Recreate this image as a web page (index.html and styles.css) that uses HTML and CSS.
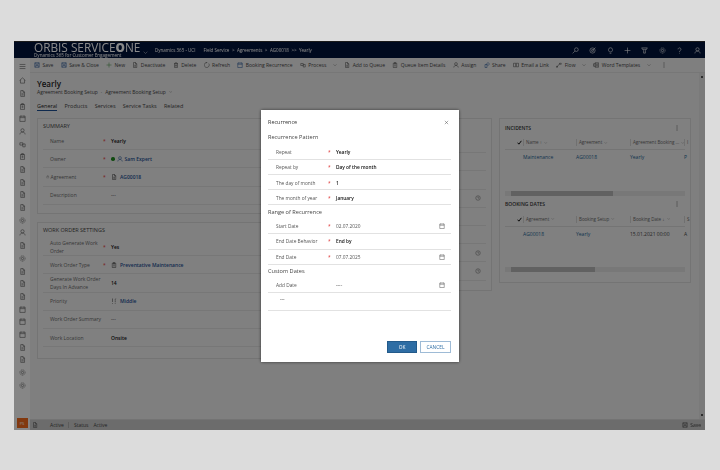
FILE: index.html
```html
<!DOCTYPE html>
<html lang="en">
  <head>
    <title>Recurrence</title>
    <meta charset="UTF-8">
    <link rel="stylesheet" href="styles.css">
  </head>
  <body>
    <svg class="sprite" xmlns="http://www.w3.org/2000/svg">
      <symbol id="doc" viewBox="0 0 12 12"><path d="M3 1h4l2.5 2.5V11H3zM7 1v3h2.5M4.5 6.5h3.500M4.500 8.500h3.500"/></symbol>
      <symbol id="clip" viewBox="0 0 12 12"><path d="M2.500 2.500h7V11h-7zM4.500 1h3v2.500h-3zM4.500 6h3M4.500 8h3"/></symbol>
      <symbol id="save" viewBox="0 0 12 12"><path d="M1.500 1.500h9v9h-9zM3.500 1.500v3h5v-3M3.500 10.500v-3.500h5v3.500"/></symbol>
      <symbol id="plus" viewBox="0 0 12 12"><path d="M6 1v10M1 6h10"/></symbol>
      <symbol id="trash" viewBox="0 0 12 12"><path d="M2 3h8M4.500 3V1.500h3V3M3 3v8h6V3M5 5v4M7 5v4"/></symbol>
      <symbol id="refresh" viewBox="0 0 12 12"><path d="M9.500 3A5 5 0 1 1 6 1M6 1l-1.500-1M6 1L4.500 2.500"/></symbol>
      <symbol id="cal" viewBox="0 0 12 12"><path d="M1.500 2h9v9h-9zM1.500 4.500h9M3.500 1v2M8.500 1v2"/></symbol>
      <symbol id="flow" viewBox="0 0 12 12"><path d="M1.500 3h5v4h-5zM6.500 5h4v5h-4z"/></symbol>
      <symbol id="person" viewBox="0 0 12 12"><circle cx="6" cy="4" r="2.800"/><path d="M1.500 11c.5-3 2-4 4.500-4s4 1 4.500 4"/></symbol>
      <symbol id="share" viewBox="0 0 12 12"><path d="M2 5h4v6H2zM5 4l3-3 3 3-3 3z"/></symbol>
      <symbol id="mail" viewBox="0 0 12 12"><path d="M1 2.500h4.500v7H1zM6.500 2.500H11v7H6.500z"/></symbol>
      <symbol id="spark" viewBox="0 0 12 12"><path d="M1.500 9.500c3 0 3-5 6-6M7 2.500h3.500v2H7zM1 8.500h2v2H1z"/></symbol>
      <symbol id="word" viewBox="0 0 12 12"><path d="M4 1.500h7v9H4zM1 3.500h5v5H1zM7 4h3M7 6h3M7 8h3"/></symbol>
      <symbol id="home" viewBox="0 0 12 12"><path d="M1 6l5-4.500L11 6M2.500 5v5.500h7V5"/></symbol>
      <symbol id="gear" viewBox="0 0 12 12"><circle cx="6" cy="6" r="2"/><circle cx="6" cy="6" r="4.500" stroke-dasharray="2 1"/></symbol>
      <symbol id="clock" viewBox="0 0 12 12"><circle cx="6" cy="6" r="4.500"/><path d="M6 3v3.200h2.200"/></symbol>
      <symbol id="search" viewBox="0 0 12 12"><circle cx="7.500" cy="4.500" r="3.200"/><path d="M5 7l-4 4"/></symbol>
      <symbol id="target" viewBox="0 0 12 12"><circle cx="6" cy="6" r="4.500"/><circle cx="6" cy="6" r="1.800"/><path d="M6 6l5-5"/></symbol>
      <symbol id="bulb" viewBox="0 0 12 12"><path d="M4.500 8.500C3 7.500 2.500 6 2.500 4.800a3.500 3.500 0 0 1 7 0c0 1.200-.5 2.700-2 3.700zM4.500 10.800h3"/></symbol>
      <symbol id="filter" viewBox="0 0 12 12"><path d="M1 1.500h10L7.500 6v4.500h-3V6zM2.800 4h6.400"/></symbol>
      <symbol id="help" viewBox="0 0 12 12"><path d="M3.500 4a2.500 2.500 0 1 1 4 2C6.500 6.800 6 7 6 8.500M6 10v1.200"/></symbol>
      <symbol id="chev" viewBox="0 0 12 12"><path d="M1.500 4L6 8.500 10.500 4"/></symbol>
      <symbol id="close" viewBox="0 0 12 12"><path d="M2 2l8 8M10 2l-8 8"/></symbol>
      <symbol id="check" viewBox="0 0 12 12"><path d="M1.500 6.500L4.500 10l6-8" stroke-width="2.400"/></symbol>
      <symbol id="lock" viewBox="0 0 12 12"><path d="M2.500 5.500h7V11h-7zM4 5.500V3.500a2 2 0 0 1 4 0v2"/></symbol>
      <symbol id="bars" viewBox="0 0 12 12"><path d="M1 2.500h10M1 6h10M1 9.500h10"/></symbol>
      <symbol id="more" viewBox="0 0 12 12"><path d="M6 1v2M6 5v2M6 9v2" stroke-width="1.600"/></symbol>
      <symbol id="prio" viewBox="0 0 12 12"><path d="M3 1v7M3 10v1.500M8 4l1.500-3M8.500 4.500v4M8.500 10v1.500"/></symbol>
    </svg>

    <div class="window">
      <header class="topbar">
        <div class="brand">
          <span class="logo">ORBIS SERVICE<b>O</b>NE</span>
          <span class="brand-sub">Dynamics 365 for Customer Engagement</span>
        </div>
        <svg class="ico top-chev"><use href="#chev"/></svg>
        <nav class="crumbs">
          <span class="app">Dynamics 365 - UCI</span>
          <span>Field Service</span><i>&gt;</i>
          <span>Agreements</span><i>&gt;</i>
          <span>AG00018</span><i>&gt;&gt;</i>
          <span>Yearly</span>
        </nav>
        <div class="top-icons">
          <svg class="ico"><use href="#search"/></svg>
          <svg class="ico"><use href="#target"/></svg>
          <svg class="ico"><use href="#bulb"/></svg>
          <svg class="ico"><use href="#plus"/></svg>
          <svg class="ico"><use href="#filter"/></svg>
          <svg class="ico"><use href="#gear"/></svg>
          <svg class="ico"><use href="#help"/></svg>
          <svg class="ico"><use href="#person"/></svg>
        </div>
      </header>

      <div class="below">
        <aside class="sidebar">
          <svg class="ico menu"><use href="#bars"/></svg>
          <svg class="ico"><use href="#home"/></svg>
          <svg class="ico"><use href="#doc"/></svg>
          <svg class="ico"><use href="#clip"/></svg>
          <svg class="ico"><use href="#cal"/></svg>
          <svg class="ico"><use href="#person"/></svg>
          <svg class="ico"><use href="#flow"/></svg>
          <svg class="ico"><use href="#clip"/></svg>
          <svg class="ico"><use href="#doc"/></svg>
          <svg class="ico"><use href="#doc"/></svg>
          <svg class="ico"><use href="#doc"/></svg>
          <svg class="ico"><use href="#doc"/></svg>
          <svg class="ico"><use href="#gear"/></svg>
          <svg class="ico"><use href="#person"/></svg>
          <svg class="ico"><use href="#doc"/></svg>
          <svg class="ico"><use href="#gear"/></svg>
          <svg class="ico"><use href="#doc"/></svg>
          <svg class="ico"><use href="#doc"/></svg>
          <svg class="ico"><use href="#doc"/></svg>
          <svg class="ico"><use href="#cal"/></svg>
          <svg class="ico"><use href="#cal"/></svg>
          <svg class="ico"><use href="#cal"/></svg>
          <svg class="ico"><use href="#doc"/></svg>
          <svg class="ico"><use href="#doc"/></svg>
          <svg class="ico"><use href="#gear"/></svg>
          <svg class="ico"><use href="#gear"/></svg>
          <span class="avatar">PS</span>
        </aside>

        <div class="main">
          <div class="commands">
            <span class="cmd"><svg class="ico blue"><use href="#save"/></svg>Save</span>
            <span class="cmd"><svg class="ico blue"><use href="#save"/></svg>Save &amp; Close</span>
            <span class="cmd"><svg class="ico green"><use href="#plus"/></svg>New</span>
            <span class="cmd"><svg class="ico"><use href="#doc"/></svg>Deactivate</span>
            <span class="cmd"><svg class="ico"><use href="#trash"/></svg>Delete</span>
            <span class="cmd"><svg class="ico"><use href="#refresh"/></svg>Refresh</span>
            <span class="cmd"><svg class="ico blue"><use href="#cal"/></svg>Booking Recurrence</span>
            <span class="cmd"><svg class="ico"><use href="#flow"/></svg>Process<svg class="ico small"><use href="#chev"/></svg></span>
            <span class="cmd"><svg class="ico"><use href="#doc"/></svg>Add to Queue</span>
            <span class="cmd"><svg class="ico"><use href="#clip"/></svg>Queue Item Details</span>
            <span class="cmd"><svg class="ico"><use href="#person"/></svg>Assign</span>
            <span class="cmd"><svg class="ico blue"><use href="#share"/></svg>Share</span>
            <span class="cmd"><svg class="ico"><use href="#mail"/></svg>Email a Link</span>
            <span class="cmd"><svg class="ico"><use href="#spark"/></svg>Flow<svg class="ico small"><use href="#chev"/></svg></span>
            <span class="cmd"><svg class="ico"><use href="#word"/></svg>Word Templates<svg class="ico small"><use href="#chev"/></svg></span>
            <svg class="ico kebab"><use href="#more"/></svg>
          </div>

          <div class="content">
            <div class="page">
              <h1 class="title">Yearly</h1>
              <div class="subtitle"><span>Agreement Booking Setup</span><span>·</span><span>Agreement Booking Setup</span><svg class="ico tiny"><use href="#chev"/></svg></div>
              <div class="tabs">
                <span class="tab on">General</span>
                <span class="tab">Products</span>
                <span class="tab">Services</span>
                <span class="tab">Service Tasks</span>
                <span class="tab">Related</span>
              </div>

              <div class="columns">
                <div class="col">
                  <section class="card summary">
                    <h2>SUMMARY</h2>
                    <div class="row"><label>Name</label><em>*</em><strong>Yearly</strong></div>
                    <div class="row"><label>Owner</label><em>*</em><a><span class="dot"></span><svg class="ico link"><use href="#person"/></svg>Sam Expert</a></div>
                    <div class="row"><label class="locked"><svg class="ico tiny"><use href="#lock"/></svg>Agreement</label><em>*</em><a><svg class="ico dark"><use href="#doc"/></svg>AG00018</a></div>
                    <div class="row"><label>Description</label><em></em><span>---</span></div>
                  </section>
                  <section class="card settings">
                    <h2>WORK ORDER SETTINGS</h2>
                    <div class="row"><label>Auto Generate Work Order</label><em>*</em><strong>Yes</strong></div>
                    <div class="row"><label>Work Order Type</label><em>*</em><a><svg class="ico dark"><use href="#clip"/></svg>Preventative Maintenance</a></div>
                    <div class="row"><label>Generate Work Order Days In Advance</label><em></em><strong>14</strong></div>
                    <div class="row"><label>Priority</label><em></em><a><svg class="ico dark"><use href="#prio"/></svg>Middle</a></div>
                    <div class="row"><label>Work Order Summary</label><em></em><span>---</span></div>
                    <div class="row"><label>Work Location</label><em></em><strong>Onsite</strong></div>
                  </section>
                </div>

                <section class="card middle">
                  <div class="slot"></div>
                  <div class="slot"></div>
                  <div class="slot"></div>
                  <div class="slot"><svg class="ico clock"><use href="#clock"/></svg></div>
                  <div class="slot"></div>
                  <div class="slot"></div>
                  <div class="slot"><svg class="ico clock"><use href="#clock"/></svg></div>
                  <div class="slot"><svg class="ico clock"><use href="#clock"/></svg></div>
                </section>

                <section class="card side">
                  <div class="panel">
                    <div class="panel-head"><h2>INCIDENTS</h2><svg class="ico"><use href="#more"/></svg></div>
                    <div class="grid-row grid-head">
                      <span class="tick"><svg class="ico"><use href="#check"/></svg></span>
                      <span>Name ↑ <svg class="ico tiny"><use href="#chev"/></svg></span>
                      <span>Agreement <svg class="ico tiny"><use href="#chev"/></svg></span>
                      <span>Agreement Booking ... <svg class="ico tiny"><use href="#chev"/></svg></span>
                      <span>I</span>
                    </div>
                    <div class="grid-row">
                      <span></span><a>Maintenance</a><a>AG00018</a><a>Yearly</a><a>P</a>
                    </div>
                    <div class="hscroll"><span class="thumb first"></span></div>
                  </div>
                  <div class="panel">
                    <div class="panel-head"><h2>BOOKING DATES</h2><svg class="ico"><use href="#more"/></svg></div>
                    <div class="grid-row grid-head">
                      <span class="tick"><svg class="ico"><use href="#check"/></svg></span>
                      <span>Agreement <svg class="ico tiny"><use href="#chev"/></svg></span>
                      <span>Booking Setup <svg class="ico tiny"><use href="#chev"/></svg></span>
                      <span>Booking Date ↓ <svg class="ico tiny"><use href="#chev"/></svg></span>
                      <span>S</span>
                    </div>
                    <div class="grid-row">
                      <span></span><a>AG00018</a><a>Yearly</a><span>15.01.2021 00:00</span><span>A</span>
                    </div>
                    <div class="hscroll"><span class="thumb second"></span></div>
                  </div>
                </section>
              </div>
            </div>
            <div class="vscroll"><span></span><span></span></div>
          </div>

          <footer class="status">
            <svg class="ico"><use href="#doc"/></svg>
            <span class="state">Active</span>
            <span>Status</span>
            <span>Active</span>
            <span class="status-save"><svg class="ico"><use href="#save"/></svg>Save</span>
          </footer>
        </div>
      </div>

      <div class="overlay"></div>

      <div class="dialog">
        <div class="dialog-head">
          <span>Recurrence</span>
          <svg class="ico"><use href="#close"/></svg>
        </div>

        <h3>Recurrence Pattern</h3>
        <div class="field lower"><label>Repeat</label><em>*</em><strong>Yearly</strong></div>
        <div class="field lower"><label>Repeat by</label><em>*</em><strong>Day of the month</strong></div>
        <div class="field lower"><label>The day of month</label><em>*</em><strong>1</strong></div>
        <div class="field lower"><label>The month of year</label><em>*</em><strong>January</strong></div>

        <h3 class="range">Range of Recurrence</h3>
        <div class="field"><label>Start Date</label><em>*</em><span>02.07.2020</span><svg class="ico"><use href="#cal"/></svg></div>
        <div class="field"><label>End Date Behavior</label><em>*</em><strong>End by</strong></div>
        <div class="field"><label>End Date</label><em>*</em><span>07.07.2025</span><svg class="ico"><use href="#cal"/></svg></div>

        <h3 class="tight">Custom Dates</h3>
        <div class="field"><label>Add Date</label><em></em><span>----</span><svg class="ico"><use href="#cal"/></svg></div>
        <div class="notes">---</div>

        <div class="dialog-foot">
          <button class="btn primary">OK</button>
          <button class="btn">CANCEL</button>
        </div>
      </div>
    </div>
  </body>
</html>
```

FILE: styles.css
```css
* {
  box-sizing: border-box;
}

body {
  margin: 0;
  padding: 41px 15px 40px 14px;
  background: #dcdcdc;
  font-family: "Open Sans", "Liberation Sans", sans-serif;
  font-size: 5px;
  color: #444;
}

.sprite {
  display: none;
}

.ico {
  width: 6px;
  height: 6px;
  flex: none;
  fill: none;
  stroke: currentColor;
  stroke-width: 1;
}
.ico.small {
  width: 4px;
  height: 4px;
  margin-left: 4px;
}
.ico.tiny {
  width: 3.5px;
  height: 3.5px;
}
.blue { color: #1d4f91; }
.green { color: #3a8a3a; }

.window {
  position: relative;
  height: 389px;
  display: flex;
  flex-direction: column;
  filter: blur(.3px);
}

.overlay {
  position: absolute;
  inset: 0;
  background: rgba(0, 0, 0, .46);
}

/* top bar */
.topbar {
  height: 17px;
  flex: none;
  display: flex;
  align-items: center;
  background: #00133a;
  color: #fff;
  padding-left: 20px;
  border-top: 1px solid #333;
}

.brand {
  width: 108px;
  height: 16px;
  display: flex;
  flex-direction: column;
}

.logo {
  font-size: 11.800px;
  line-height: 10.500px;
  white-space: nowrap;
  color: #fff;
}
.logo b {
  font-weight: 800;
}

.brand-sub {
  font-size: 4.600px;
  line-height: 5.500px;
  white-space: nowrap;
}

.top-chev {
  width: 5px;
  height: 5px;
  margin: 4px 5px 0 1px;
}

.crumbs {
  display: flex;
  gap: 2.500px;
  font-size: 4.500px;
  padding-left: 2px;
  white-space: nowrap;
}
.crumbs i {
  font-style: normal;
}
.crumbs .app {
  margin-right: 5.500px;
}

.top-icons {
  margin-left: auto;
  display: flex;
  gap: 10.400px;
  padding-right: 4.500px;
}
.top-icons .ico {
  width: 7px;
  height: 7px;
}

.below {
  flex: 1;
  display: flex;
  min-height: 0;
}

/* left nav */
.sidebar {
  width: 16px;
  flex: none;
  display: flex;
  flex-direction: column;
  align-items: center;
  gap: 5.700px;
  padding-top: 4.500px;
  background: #f8f8f8;
  color: #555;
}
.sidebar .ico {
  width: 7px;
  height: 7px;
}
.menu {
  margin-bottom: 2px;
}

.avatar {
  margin-top: auto;
  margin-bottom: 2px;
  width: 11px;
  height: 10px;
  background: #f06a1d;
  color: #fff;
  font-size: 4px;
  display: flex;
  align-items: center;
  justify-content: center;
}

.main {
  flex: 1;
  min-width: 0;
  display: flex;
  flex-direction: column;
  background: #ebebeb;
}

/* command bar */
.commands {
  height: 15px;
  flex: none;
  display: flex;
  align-items: center;
  gap: 7.300px;
  padding-left: 4px;
  background: #ebebeb;
  border-bottom: 1px solid #ddd;
  white-space: nowrap;
}
.cmd {
  display: flex;
  align-items: center;
  gap: 2.500px;
}
.kebab {
  margin-left: 3px;
}

.content {
  flex: 1;
  min-height: 0;
  display: flex;
}

.page {
  flex: 1;
  padding: 6px 7px 0 7px;
}

.title {
  margin: 0;
  font-size: 8px;
  line-height: 10px;
  font-weight: 600;
  color: #222;
}
.subtitle {
  font-size: 5px;
  line-height: 6px;
  display: flex;
  align-items: center;
  gap: 3px;
}

.tabs {
  display: flex;
  gap: 7.300px;
  margin-top: 7px;
  height: 9px;
  font-size: 5.500px;
  line-height: 8px;
}
.tab.on {
  border-bottom: 1px solid #1d4f91;
  color: #222;
}

.columns {
  display: grid;
  grid-template-columns: 228px 220px 192px;
  gap: 7px;
  margin-top: 7px;
  align-items: start;
}
.col {
  display: flex;
  flex-direction: column;
  gap: 8px;
}

.card {
  border: 1px solid #d6d6d6;
  background: #ededed;
}
.card h2 {
  margin: 0;
  font-size: 5.500px;
  font-weight: 400;
  color: #444;
}

.summary {
  height: 96px;
  padding: 3px 0 0 5px;
}
.settings {
  height: 137px;
  padding: 3px 0 0 5px;
}
.summary h2, .settings h2 {
  line-height: 8px;
  margin-bottom: 2px;
}
.settings h2 {
  margin-bottom: 4px;
}

.row {
  height: 18.200px;
  display: grid;
  grid-template-columns: 53px 8px 1fr;
  align-items: center;
  padding-left: 7px;
  border-bottom: 1px solid #dcdcdc;
  line-height: 8px;
  color: #333;
}
.row label {
  color: #666;
}
.locked {
  display: flex;
  align-items: center;
  gap: 1px;
  margin-left: -4px;
}
em {
  color: #d33;
  font-style: normal;
}
strong {
  font-weight: 600;
  color: #111;
}
a {
  color: #1d4f91;
  font-weight: 600;
  display: flex;
  align-items: center;
  gap: 3px;
}
.grid-row a {
  font-weight: 400;
}
.ico.dark {
  color: #333;
}
.dot {
  width: 3.500px;
  height: 3.500px;
  border-radius: 50%;
  background: #1f8a1f;
}
.ico.link {
  margin-left: -1px;
  margin-right: -1px;
}

.middle {
  height: 173px;
  padding: 16px 5px 0 6px;
}
.slot {
  height: 18.200px;
  display: flex;
  align-items: center;
  justify-content: flex-end;
  padding-right: 5px;
  border-bottom: 1px solid #dcdcdc;
}
.clock {
  color: #666;
}

/* subgrids */
.side {
  height: 165px;
  padding: 0 5px;
}
.panel {
  height: 76.500px;
  display: flex;
  flex-direction: column;
}
.panel-head {
  height: 17px;
  flex: none;
  display: flex;
  align-items: center;
  justify-content: space-between;
  padding-right: 5px;
}
.card .panel-head h2 {
  font-size: 5px;
  font-weight: 600;
  color: #333;
}

.grid-row {
  display: grid;
  grid-template-columns: 18px 53px 54px 54px 3px;
  height: 14px;
  align-items: center;
  white-space: nowrap;
  font-size: 5px;
}
.grid-row a {
  color: #1d5f91;
}
.grid-head {
  border-bottom: 1px solid #d6d6d6;
  font-size: 4.500px;
  color: #666;
}
.grid-head span {
  border-left: 1px solid #d0d0d0;
  padding-left: 2px;
  height: 7px;
  line-height: 7px;
  display: flex;
  align-items: center;
  gap: 2px;
}
.grid-head .tick {
  border-left: none;
  justify-content: flex-end;
  color: #111;
  padding-right: 1px;
}
.tick .ico {
  width: 5px;
  height: 5px;
}

.hscroll {
  margin-top: auto;
  height: 5px;
  background: #dedede;
  padding-left: 6px;
  display: flex;
  align-items: center;
}
.thumb {
  height: 5px;
  background: #b4b4b4;
}
.thumb.first { width: 102px; }
.thumb.second { width: 84px; }

.vscroll {
  width: 6px;
  flex: none;
  background: #e2e2e2;
  display: flex;
  flex-direction: column;
  justify-content: space-between;
  padding: 3px 2px;
}
.vscroll span {
  width: 2px;
  height: 2px;
  background: #555;
}

/* status bar */
.status {
  height: 11px;
  flex: none;
  display: flex;
  align-items: center;
  gap: 5px;
  padding: 0 4px 0 2px;
  background: #c8c8c8;
  border-top: 1px solid #d4d4d4;
  color: #444;
}
.state {
  margin-left: 7px;
  padding-right: 4px;
  border-right: 1px solid #aaa;
}
.status-save {
  margin-left: auto;
  display: flex;
  align-items: center;
  gap: 2px;
}

/* recurrence dialog */
.dialog {
  position: absolute;
  left: 247px;
  top: 69px;
  width: 198px;
  height: 252px;
  padding: 0 8px 9px 7px;
  background: #fff;
  box-shadow: 0 0 3px rgba(0, 0, 0, .6);
  display: flex;
  flex-direction: column;
  color: #333;
  font-size: 4.800px;
}

.dialog-head {
  height: 20px;
  flex: none;
  display: flex;
  justify-content: space-between;
  align-items: center;
  padding: 4px 2px 0 0;
  font-size: 5.500px;
}
.dialog-head .ico {
  width: 5px;
  height: 5px;
}

.dialog h3 {
  margin: 0;
  height: 14.300px;
  flex: none;
  display: flex;
  align-items: center;
  font-size: 5.600px;
  font-weight: 400;
  color: #444;
}
.dialog h3.range {
  height: 13.500px;
}
.dialog h3.tight {
  height: 12.700px;
}

.field {
  height: 15.300px;
  flex: none;
  display: grid;
  grid-template-columns: 52px 8px 1fr auto;
  align-items: center;
  padding: 0 6px 0 8px;
  border-bottom: 1px solid #e2e2e2;
}
.field.lower {
  padding-top: 1px;
}
.field label {
  color: #555;
  white-space: nowrap;
}
.field span {
  color: #555;
}
.field .ico {
  color: #555;
}

.notes {
  height: 18px;
  flex: none;
  padding: 3px 0 0 12px;
  border-bottom: 1px solid #e2e2e2;
  color: #555;
}

.dialog-foot {
  margin-top: auto;
  display: flex;
  justify-content: flex-end;
  gap: 3px;
}
.btn {
  width: 31px;
  height: 12px;
  padding: 0;
  font-family: inherit;
  font-size: 4.800px;
  background: #fff;
  color: #2e6da4;
  border: 1px solid #9ebbd6;
}
.btn.primary {
  width: 30px;
  background: #2e6da4;
  border-color: #235a8a;
  color: #fff;
}
```
